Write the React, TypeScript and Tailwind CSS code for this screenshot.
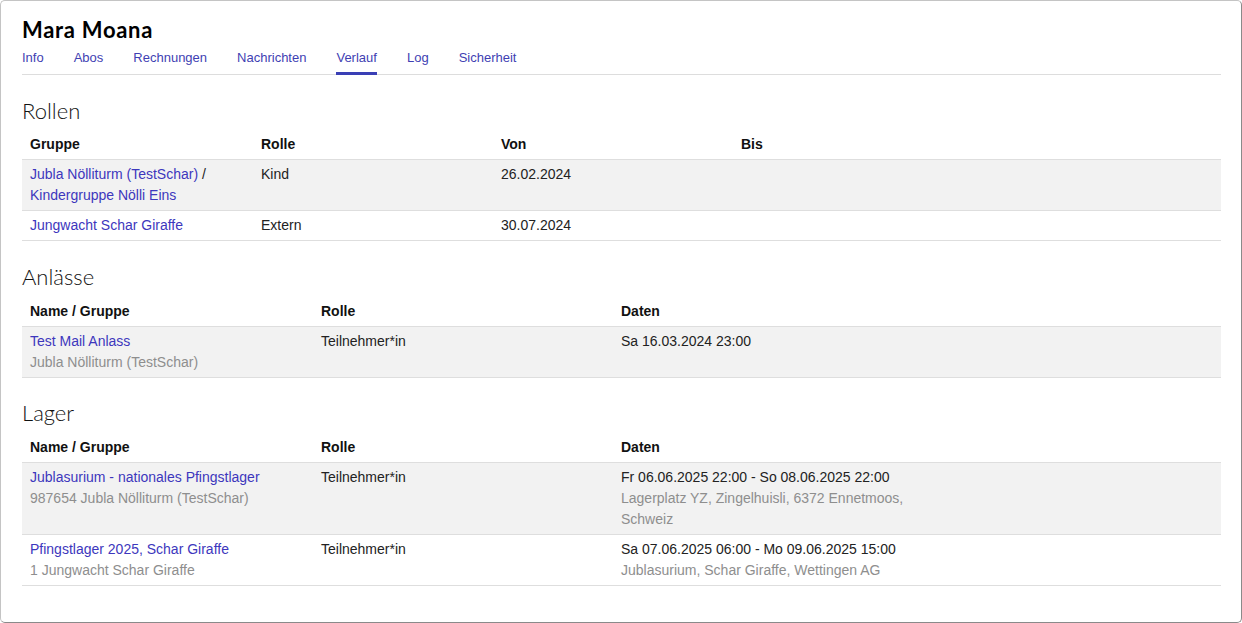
import type { ReactNode } from "react";

type Col = { label: string; width?: string };

const tabs = ["Info", "Abos", "Rechnungen", "Nachrichten", "Verlauf", "Log", "Sicherheit"];

function Link({ children }: { children: ReactNode }) {
    return <span className="text-[#3d37bd]">{children}</span>;
}

function Muted({ children }: { children: ReactNode }) {
    return <div className="text-[#8e8e8e]">{children}</div>;
}

function Section({
    title,
    cols,
    rows,
    headClass,
}: {
    title: string;
    cols: Col[];
    rows: ReactNode[][];
    headClass: string;
}) {
    return (
        <section>
            <h2
                className={`${headClass} text-[22px] leading-[26px] font-light text-[#111] font-['Century_Gothic',Lato,sans-serif]`}
            >
                {title}
            </h2>
            <table className="w-full table-fixed border-collapse text-[14px] leading-[21px] text-[#222]">
                <colgroup>
                    {cols.map((c) => (
                        <col key={c.label} className={c.width} />
                    ))}
                </colgroup>
                <thead>
                    <tr className="border-b border-[#dedede]">
                        {cols.map((c) => (
                            <th key={c.label} className="px-2 py-1 text-left font-bold text-[#111]">
                                {c.label}
                            </th>
                        ))}
                    </tr>
                </thead>
                <tbody>
                    {rows.map((r, i) => (
                        <tr key={i} className={`border-b border-[#dedede] ${i % 2 === 0 ? "bg-[#f2f2f2]" : "bg-white"}`}>
                            {r.map((cell, j) => (
                                <td key={j} className="px-2 py-1 align-top">
                                    {cell}
                                </td>
                            ))}
                        </tr>
                    ))}
                </tbody>
            </table>
        </section>
    );
}

export default function App() {
    return (
        <div className="w-[1242px] h-[623px] overflow-hidden rounded-[5px] border border-t-[#c4c4c4] border-l-[#c4c4c4] border-r-[#8a8a8a] border-b-[#8a8a8a] bg-white pl-[21px] pr-[20px] pt-[15px] font-['Liberation_Sans',Arial,sans-serif]">
            <h1 className="text-[22px] leading-[28px] font-bold tracking-[0.7px] text-black font-['Century_Gothic',Lato,sans-serif]">
                Mara Moana
            </h1>
            <nav className="mt-[6px] flex gap-[30px] border-b border-[#dddddd]">
                {tabs.map((t) => (
                    <span
                        key={t}
                        className={`-mb-px pb-[7px] text-[13px] leading-[15px] text-[#3f3fb3] border-b-[3px] ${
                            t === "Verlauf" ? "border-[#3a3fb5]" : "border-transparent"
                        }`}
                    >
                        {t}
                    </span>
                ))}
            </nav>

            <Section
                title="Rollen"
                headClass="mt-[23px] mb-[6px]"
                cols={[
                    { label: "Gruppe", width: "w-[231px]" },
                    { label: "Rolle", width: "w-[240px]" },
                    { label: "Von", width: "w-[240px]" },
                    { label: "Bis" },
                ]}
                rows={[
                    [
                        <>
                            <Link>Jubla Nölliturm (TestSchar)</Link> / <Link>Kindergruppe Nölli Eins</Link>
                        </>,
                        "Kind",
                        "26.02.2024",
                        "",
                    ],
                    [<Link>Jungwacht Schar Giraffe</Link>, "Extern", "30.07.2024", ""],
                ]}
            />

            <Section
                title="Anlässe"
                headClass="mt-[23px] mb-[7px]"
                cols={[
                    { label: "Name / Gruppe", width: "w-[291px]" },
                    { label: "Rolle", width: "w-[300px]" },
                    { label: "Daten" },
                ]}
                rows={[
                    [
                        <>
                            <Link>Test Mail Anlass</Link>
                            <Muted>Jubla Nölliturm (TestSchar)</Muted>
                        </>,
                        "Teilnehmer*in",
                        "Sa 16.03.2024 23:00",
                    ],
                ]}
            />

            <Section
                title="Lager"
                headClass="mt-[22px] mb-[7px]"
                cols={[
                    { label: "Name / Gruppe", width: "w-[291px]" },
                    { label: "Rolle", width: "w-[300px]" },
                    { label: "Daten" },
                ]}
                rows={[
                    [
                        <>
                            <Link>Jublasurium - nationales Pfingstlager</Link>
                            <Muted>987654 Jubla Nölliturm (TestSchar)</Muted>
                        </>,
                        "Teilnehmer*in",
                        <>
                            <div>Fr 06.06.2025 22:00 - So 08.06.2025 22:00</div>
                            <Muted>
                                Lagerplatz YZ, Zingelhuisli, 6372 Ennetmoos,
                                <br />
                                Schweiz
                            </Muted>
                        </>,
                    ],
                    [
                        <>
                            <Link>Pfingstlager 2025, Schar Giraffe</Link>
                            <Muted>1 Jungwacht Schar Giraffe</Muted>
                        </>,
                        "Teilnehmer*in",
                        <>
                            <div>Sa 07.06.2025 06:00 - Mo 09.06.2025 15:00</div>
                            <Muted>Jublasurium, Schar Giraffe, Wettingen AG</Muted>
                        </>,
                    ],
                ]}
            />
        </div>
    );
}
